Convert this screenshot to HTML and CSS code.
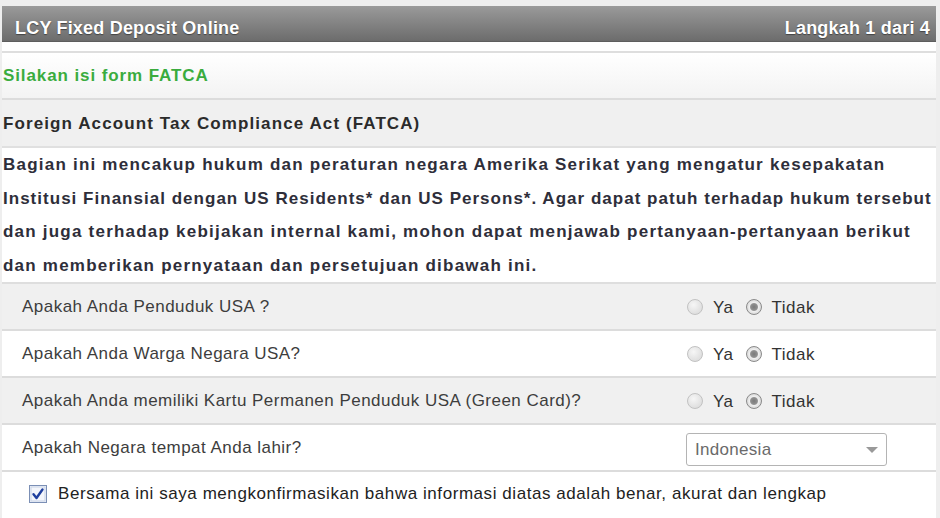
FILE: index.html
```html
<!DOCTYPE html>
<html>
<head>
<meta charset="utf-8">
<link rel="stylesheet" href="styles.css">
</head>
<body>
<div class="page">
  <div class="header">
    <span class="title">LCY Fixed Deposit Online</span>
    <span class="step">Langkah 1 dari 4</span>
  </div>
  <div class="spacer"></div>
  <div class="notice">Silakan isi form FATCA</div>
  <div class="section-title">Foreign Account Tax Compliance Act (FATCA)</div>
  <div class="intro">Bagian ini mencakup hukum dan peraturan negara Amerika Serikat yang mengatur kesepakatan<br><span class="tight">Institusi Finansial dengan US Residents* dan US Persons*. Agar dapat patuh terhadap hukum tersebut</span><br>dan juga terhadap kebijakan internal kami, mohon dapat menjawab pertanyaan-pertanyaan berikut<br>dan memberikan pernyataan dan persetujuan dibawah ini.</div>
  <div class="row alt">
    <span class="q">Apakah Anda Penduduk USA ?</span>
    <span class="opts"><span class="radio"></span><span class="lbl ya">Ya</span><span class="radio on"></span><span class="lbl">Tidak</span></span>
  </div>
  <div class="row">
    <span class="q">Apakah Anda Warga Negara USA?</span>
    <span class="opts"><span class="radio"></span><span class="lbl ya">Ya</span><span class="radio on"></span><span class="lbl">Tidak</span></span>
  </div>
  <div class="row alt">
    <span class="q">Apakah Anda memiliki Kartu Permanen Penduduk USA (Green Card)?</span>
    <span class="opts"><span class="radio"></span><span class="lbl ya">Ya</span><span class="radio on"></span><span class="lbl">Tidak</span></span>
  </div>
  <div class="row">
    <span class="q">Apakah Negara tempat Anda lahir?</span>
    <span class="opts"><span class="select"><span>Indonesia</span><span class="arrow"></span></span></span>
  </div>
  <div class="row confirm">
    <svg class="check" width="18" height="18" viewBox="0 0 18 18"><rect x="0.5" y="0.5" width="17" height="17" fill="#eef2fa" stroke="#7b8fb5"/><rect x="2" y="2" width="14" height="14" fill="#f4f6fb" stroke="#c9d3e6"/><path d="M4.5 9.2 L7.5 13 L13.5 4.5" fill="none" stroke="#1f3f9e" stroke-width="2.4" stroke-linejoin="round" stroke-linecap="round"/></svg>
    <span class="ctext">Bersama ini saya mengkonfirmasikan bahwa informasi diatas adalah benar, akurat dan lengkap</span>
  </div>
</div>
</body>
</html>
```

FILE: styles.css
```css
html, body {
  margin: 0;
  padding: 0;
  background: #eeeeee;
}
body {
  font-family: "Liberation Sans", Arial, sans-serif;
  width: 940px;
  height: 518px;
  overflow: hidden;
}
.page {
  margin: 6px 4px 0 2px;
  background: #fff;
}
.header {
  height: 36px;
  box-sizing: border-box;
  background: linear-gradient(#9a9a9a, #6c6c6c);
  border-bottom: 1px solid #5e5e5e;
  display: flex;
  justify-content: space-between;
  align-items: center;
  padding: 9px 6px 0 13px;
  color: #fff;
  font-weight: bold;
  font-size: 18px;
  letter-spacing: 0.2px;
  text-shadow: 0 1px 1px #444;
}
.spacer {
  height: 9px;
  background: #fff;
  border-bottom: 2px solid #dedede;
}
.notice {
  height: 45px;
  line-height: 45px;
  padding-left: 1px;
  color: #3aac3e;
  font-weight: bold;
  font-size: 17px;
  letter-spacing: 0.9px;
  background: linear-gradient(#ffffff, #f3f3f3);
  border-bottom: 2px solid #dcdcdc;
}
.section-title {
  height: 46px;
  line-height: 48px;
  padding-left: 1px;
  background: #f0f0f0;
  font-weight: bold;
  font-size: 17px;
  color: #2b2b2b;
  letter-spacing: 1.1px;
  border-bottom: 2px solid #e0e0e0;
}
.intro {
  padding: 0 0 0 1px;
  font-weight: bold;
  font-size: 17px;
  line-height: 33.5px;
  color: #2e2e3a;
  letter-spacing: 1.22px;
  background: #fff;
  border-bottom: 2px solid #dedede;
  white-space: nowrap;
  overflow: hidden;
}
.intro .tight {
  letter-spacing: 1.02px;
}
.row {
  height: 45px;
  display: flex;
  align-items: center;
  justify-content: space-between;
  border-bottom: 2px solid #dcdcdc;
  background: #fff;
  font-size: 17px;
  color: #3d3d3d;
  letter-spacing: 0.47px;
}
.row.alt {
  background: #f0f0f0;
}
.q {
  padding-left: 20px;
}
.opts {
  width: 250px;
  display: flex;
  align-items: center;
  color: #333;
  font-size: 17px;
  letter-spacing: 0.5px;
}
.radio {
  width: 16px;
  height: 16px;
  border-radius: 50%;
  box-sizing: border-box;
  border: 1px solid #c2c2c2;
  background: radial-gradient(circle at 40% 35%, #f6f6f6, #d6d6d6);
  margin-right: 10px;
  margin-left: 1px;
}
.radio.on {
  border: 1px solid #8a8a8a;
  background: radial-gradient(circle, #7a7a7a 0, #909090 3.4px, #efefef 4.5px, #d8d8d8 7.5px);
}
.lbl {
  margin-top: 3px;
}
.lbl.ya {
  margin-right: 11px;
}
.select {
  width: 201px;
  height: 33px;
  box-sizing: border-box;
  border: 1px solid #b4b4b4;
  border-radius: 3px;
  display: flex;
  align-items: center;
  justify-content: space-between;
  padding: 0 8px 0 8px;
  color: #6a6a6a;
  font-size: 17px;
  letter-spacing: 0.3px;
  margin-top: 4px;
}
.arrow {
  width: 0;
  height: 0;
  border-left: 6px solid transparent;
  border-right: 6px solid transparent;
  border-top: 6px solid #999;
}
.row.confirm {
  justify-content: flex-start;
  border-bottom: none;
  height: 46px;
}
.check {
  margin-left: 27px;
  margin-right: 11px;
  margin-top: -2px;
}
.ctext {
  color: #222;
  letter-spacing: 0.56px;
  margin-top: -2px;
}
```
